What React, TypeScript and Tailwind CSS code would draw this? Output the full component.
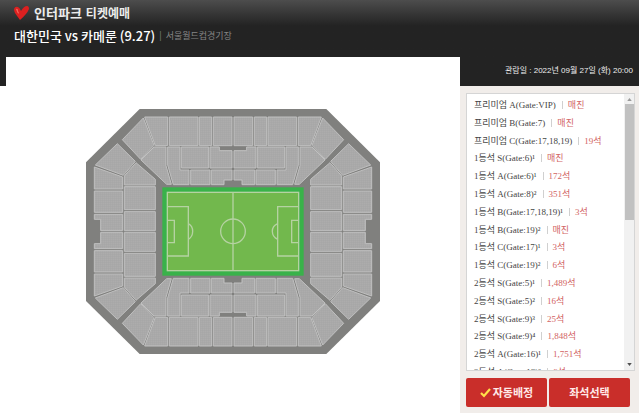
import React from "react";

const seats: [string, string][] = [
  ["프리미엄 A(Gate:VIP)", "매진"],
  ["프리미엄 B(Gate:7)", "매진"],
  ["프리미엄 C(Gate:17,18,19)", "19석"],
  ["1등석 S(Gate:6)¹", "매진"],
  ["1등석 A(Gate:6)¹", "172석"],
  ["1등석 A(Gate:8)²", "351석"],
  ["1등석 B(Gate:17,18,19)¹", "3석"],
  ["1등석 B(Gate:19)²", "매진"],
  ["1등석 C(Gate:17)¹", "3석"],
  ["1등석 C(Gate:19)²", "6석"],
  ["2등석 S(Gate:5)¹", "1,489석"],
  ["2등석 S(Gate:5)²", "16석"],
  ["2등석 S(Gate:9)³", "25석"],
  ["2등석 S(Gate:9)⁴", "1,848석"],
  ["2등석 A(Gate:16)¹", "1,751석"],
  ["2등석 A(Gate:18)³", "6석"],
];

// Seating blocks of one quarter of the stadium; the other three are mirrored.
const blocks = [
  "190,54 222,136 182,178 127,119",
  "194,51 263,51 263,137 226,137",
  "268,51 354,51 354,137 268,137",
  "358,51 395,51 395,137 358,137",
  "400,51 456,51 456,137 400,137",
  "222,141 258,141 258,197 274,253 260,253 183,180",
  "263,141 300,141 300,210 327,210 327,254 280,254 263,195",
  "304,141 386,141 386,204 304,204",
  "390,141 418,141 418,152 456,152 456,204 390,204",
  "332,210 390,210 390,254 332,254",
  "394,210 456,210 456,240 432,240 432,254 394,254",
  "112,131 166,184 130,226 46,195",
  "43,201 128,231 128,267 43,267",
  "43,273 128,273 128,337 43,337",
  "43,343 128,343 128,392 62,392 62,358 43,358",
  "168,188 226,238 226,255 133,255 133,228",
  "133,260 226,260 226,329 133,329",
  "133,335 226,335 226,392 133,392",
];

const quarters = ["", "translate(918 0) scale(-1 1)", "translate(0 789) scale(1 -1)", "translate(918 789) scale(-1 -1)"];

function Stadium() {
  return (
    <svg viewBox="18 27 882 735" className="w-[294px]" role="img" aria-label="좌석 배치도">
      <defs>
        <pattern id="seat" width="6" height="6" patternUnits="userSpaceOnUse">
          <rect width="6" height="6" fill="#adacac" />
          <path d="M0 0H6M0 0V6" stroke="#a2a1a1" strokeWidth="2" />
        </pattern>
      </defs>
      <polygon points="179,27 739,27 900,187 900,603 739,762 179,762 18,603 18,187" fill="#80807e" />
      {quarters.map((t) => (
        <g key={t} transform={t} fill="url(#seat)" stroke="#c0c0c0" strokeWidth="3">
          {blocks.map((p) => (
            <polygon key={p} points={p} />
          ))}
        </g>
      ))}
      <rect x="247" y="262" width="424" height="265" fill="#39b24a" />
      <rect x="261" y="276" width="394" height="237" fill="#72b84d" />
      <g fill="none" stroke="#b5d2a2" strokeWidth="4">
        <rect x="262" y="277" width="394" height="235" />
        <path d="M459 277V512M262 320H325V468H262M262 361H283V428H262M656 320H593V468H656M656 361H635V428H656M325 371Q338 378 338 394Q338 411 325 418M593 371Q577 378 577 394Q577 411 593 418" />
        <circle cx="459" cy="394" r="37" />
      </g>
    </svg>
  );
}

export default function App() {
  return (
    <div className="flex min-h-screen flex-col bg-white font-['Liberation_Sans','Noto_Sans_CJK_KR',sans-serif]">
      <header className="mr-px h-[86px] bg-[#232323] bg-linear-to-b from-[#4d4d4d] to-[#232323] to-30% px-3.5 pt-1 text-white">
        <div className="flex h-[18px] items-center gap-1 font-['Noto_Sans_CJK_KR',sans-serif] text-[12px] leading-4 font-bold text-[#ececec]">
          <svg viewBox="0 0 16 14" className="h-3.5 w-4" aria-hidden="true">
            <path d="M0 3Q1 0 4 1Q6 2 7 5Q10 0 13 0Q15 0 15 3Q13 8 6 14Q3 10 1 7Q0 5 0 3Z" fill="#dc2020" />
            <path d="M2 3Q4 2 4 5L5 7Q4 9 2 3" fill="#f4665a" />
          </svg>
          <span className="text-[13px]">인터파크</span>
          <span>티켓예매</span>
        </div>
        <h1 className="mt-0.5 flex h-6 items-center gap-1 font-['Noto_Sans_CJK_KR',sans-serif] text-[13px] leading-6 font-medium">
          대한민국 vs 카메룬 (9.27)
          <small className="flex gap-1 text-[9px] font-normal text-[#858585]">
            <span>|</span>
            <span>서울월드컵경기장</span>
          </small>
        </h1>
      </header>
      <div className="-mt-[29px] ml-1.5 flex flex-1">
        <main className="flex flex-1 justify-center bg-white pt-[52px]">
          <div>
            <Stadium />
          </div>
        </main>
        <aside className="flex w-[180px] flex-col pr-px">
          <p className="h-[29px] pr-1.5 text-right text-[8px] leading-7 text-[#eeeeee]">
            관람일 : 2022년 09월 27일 (화) 20:00
          </p>
          <div className="mb-0.5 flex-1 bg-[#f1edea] pt-[7px] pl-1.5">
            <div className="flex h-[278px] w-[169px] border border-[#d5d5d5] bg-white">
              <div className="flex-1 overflow-hidden pt-0.5 pl-[7px]">
                <ul className="flex h-[285px] flex-col font-['Liberation_Serif','Noto_Sans_CJK_KR',serif] text-[9px] leading-4 whitespace-nowrap text-[#444444]">
                  {seats.map(([name, left]) => (
                    <li key={name} className="flex flex-1 items-center">
                      <span>{name}</span>
                      <span className="mr-[5px] ml-1.5 h-2 w-px bg-[#d0d0d0]" />
                      <span className="text-[#d26464]">{left}</span>
                    </li>
                  ))}
                </ul>
              </div>
              <div className="flex w-2.5 flex-col items-center bg-[#f1f1f1]">
                <span className="flex h-2.5 items-center">
                  <svg viewBox="0 0 6 4" className="h-[3px] w-[5px]" aria-hidden="true">
                    <path d="M0 4L3 0L6 4Z" fill="#9a9a9a" />
                  </svg>
                </span>
                <span className="h-[116px] w-[9px] bg-[#c1c1c1]" />
                <span className="mt-auto flex h-[11px] items-center">
                  <svg viewBox="0 0 6 4" className="h-[3px] w-[5px]" aria-hidden="true">
                    <path d="M0 0L3 4L6 0Z" fill="#505050" />
                  </svg>
                </span>
              </div>
            </div>
            <div className="mt-[7px] flex gap-0.5 font-['Noto_Sans_CJK_KR',sans-serif] text-[11px] font-bold text-[#ffe9e8]">
              <button className="flex h-[29px] w-[81px] items-center justify-center gap-0.5 rounded-xs bg-[#c92e2a]">
                <svg viewBox="0 0 11 10" className="h-2.5 w-[11px]" aria-hidden="true">
                  <path d="M1 5L4 8L10 1" fill="none" stroke="#ffe14a" strokeWidth="2.2" />
                </svg>
                자동배정
              </button>
              <button className="h-[29px] w-[81px] rounded-xs bg-[#c92e2a]">좌석선택</button>
            </div>
          </div>
        </aside>
      </div>
    </div>
  );
}
